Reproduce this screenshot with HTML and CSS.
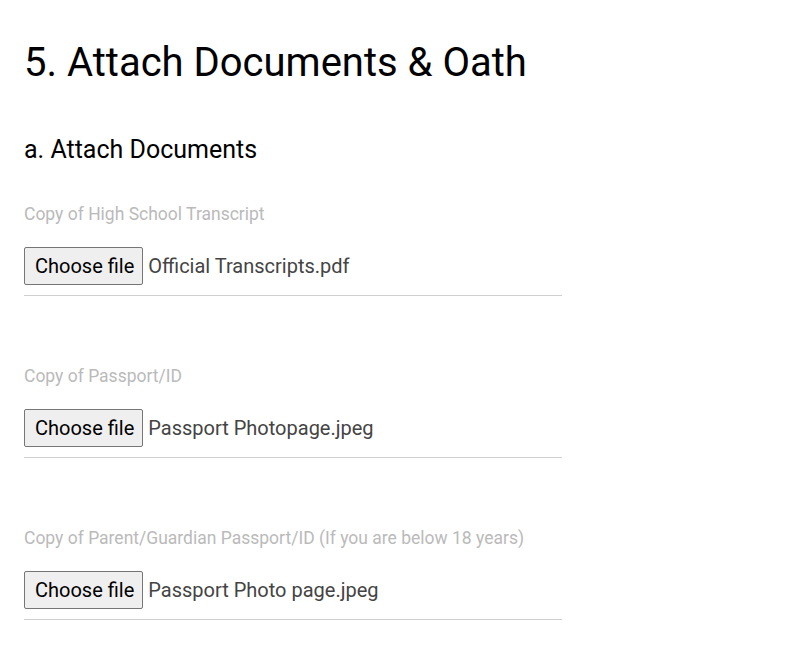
FILE: index.html
```html
<!DOCTYPE html>
<html>
<head>
<meta charset="utf-8">
<link rel="stylesheet" href="styles.css">
</head>
<body>
<main class="page">
  <h1 class="title">5. Attach Documents &amp; Oath</h1>
  <h2 class="subtitle">a. Attach Documents</h2>
  <div class="field">
    <label class="label">Copy of High School Transcript</label>
    <div class="file-row">
      <button class="file-btn" type="button">Choose file</button>
      <span class="file-name">Official Transcripts.pdf</span>
    </div>
  </div>
  <div class="field">
    <label class="label">Copy of Passport/ID</label>
    <div class="file-row">
      <button class="file-btn" type="button">Choose file</button>
      <span class="file-name">Passport Photopage.jpeg</span>
    </div>
  </div>
  <div class="field">
    <label class="label">Copy of Parent/Guardian Passport/ID (If you are below 18 years)</label>
    <div class="file-row">
      <button class="file-btn" type="button">Choose file</button>
      <span class="file-name">Passport Photo page.jpeg</span>
    </div>
  </div>
</main>
</body>
</html>
```

FILE: styles.css
```css
html, body {
  margin: 0;
  padding: 0;
  background: #ffffff;
}
body {
  font-family: Roboto, "Noto Sans", sans-serif;
  color: #000;
}
.page {
  padding: 39px 24px 0 24px;
  width: 538px;
}
.title {
  margin: 0;
  font-size: 40px;
  font-weight: 400;
  line-height: 48px;
}
.subtitle {
  margin: 49px 0 0 0;
  font-size: 25px;
  font-weight: 400;
  line-height: 28px;
}
.field {
  display: flex;
  flex-direction: column;
  margin-top: 40px;
  margin-bottom: 30px;
}
.field + .field {
  margin-top: 70px;
}
.label {
  font-size: 17.5px;
  line-height: 20px;
  color: #bababa;
}
.file-row {
  display: flex;
  align-items: center;
  gap: 5px;
  margin-top: 23px;
  padding-bottom: 10px;
  border-bottom: 1px solid #cfcfcf;
}
.file-btn {
  font-family: Roboto, "Noto Sans", sans-serif;
  font-size: 20px;
  line-height: 24px;
  color: #000;
  background: #efefef;
  border: 1px solid #767676;
  border-radius: 2px;
  padding: 6px 8px 6px 10px;
  height: 38px;
}
.file-name {
  font-size: 20px;
  color: #444;
}
```
